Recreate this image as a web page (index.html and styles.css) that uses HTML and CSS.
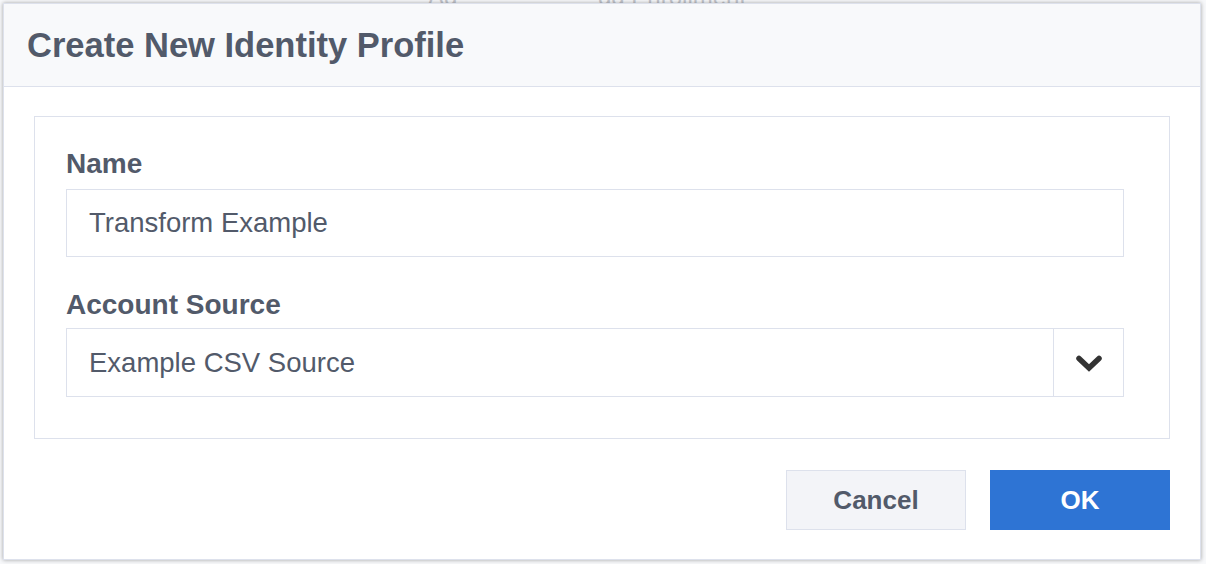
FILE: index.html
```html
<!DOCTYPE html>
<html lang="en">
<head>
<meta charset="utf-8">
<title>Create New Identity Profile</title>
<link rel="stylesheet" href="styles.css">
</head>
<body>
<div class="backdrop" aria-hidden="true">
  <span class="bd-a">Ag</span>
  <span class="bd-b">gg Enrollment</span>
</div>
<div class="modal">
  <div class="modal-header">
    <h1 class="modal-title">Create New Identity Profile</h1>
  </div>
  <div class="modal-body">
    <div class="form-box">
      <label class="field-label">Name</label>
      <div class="text-input">Transform Example</div>
      <label class="field-label second">Account Source</label>
      <div class="select">
        <div class="select-value">Example CSV Source</div>
        <div class="select-toggle">
          <svg width="28" height="18" viewBox="0 0 28 18"><path d="M4 4.5 L14 14 L24 4.5" fill="none" stroke="#333" stroke-width="5.5" stroke-linecap="round" stroke-linejoin="miter"/></svg>
        </div>
      </div>
    </div>
  </div>
  <div class="modal-footer">
    <button class="btn btn-cancel">Cancel</button>
    <button class="btn btn-ok">OK</button>
  </div>
</div>
</body>
</html>
```

FILE: styles.css
```css
* { box-sizing: border-box; }
html, body { margin: 0; padding: 0; }
body {
  background: #f7f8fa;
  font-family: "Liberation Sans", Arial, sans-serif;
  color: #525a6a;
  width: 1206px;
  height: 564px;
  overflow: hidden;
  position: relative;
}
.backdrop {
  position: absolute;
  top: -17px;
  left: 0;
  width: 100%;
  font-size: 24px;
  color: #c3c6cd;
}
.bd-a { position: absolute; left: 428px; }
.bd-b { position: absolute; left: 598px; }
.modal {
  position: relative;
  margin: 3px;
  width: 1198px;
  height: 557px;
  background: #fff;
  border: 1px solid #dde1ec;
  box-shadow: 0 0 4px rgba(0,0,0,0.35);
  display: flex;
  flex-direction: column;
}
.modal-header {
  height: 83px;
  background: #f8f9fb;
  border-bottom: 1px solid #dde1ec;
  display: flex;
  align-items: center;
  padding-left: 23px;
}
.modal-title {
  margin: 0;
  font-size: 34.5px;
  font-weight: bold;
  color: #525a6a;
  line-height: 40px;
}
.modal-body {
  padding: 29px 30px 0 30px;
}
.form-box {
  border: 1px solid #dde1ec;
  padding: 31px 45px 41px 31px;
  display: flex;
  flex-direction: column;
}
.field-label {
  display: block;
  font-size: 28px;
  font-weight: bold;
  line-height: 32px;
  margin-bottom: 9px;
  color: #525a6a;
}
.field-label.second {
  margin-top: 32px;
  margin-bottom: 7px;
}
.text-input {
  height: 68px;
  border: 1px solid #dde1ec;
  padding: 0 22px;
  font-size: 27.5px;
  line-height: 66px;
  color: #525a6a;
}
.select {
  height: 69px;
  border: 1px solid #dde1ec;
  display: flex;
}
.select-value {
  flex: 1;
  padding: 0 22px;
  font-size: 27.5px;
  line-height: 67px;
  color: #525a6a;
}
.select-toggle {
  width: 70px;
  border-left: 1px solid #dde1ec;
  display: flex;
  align-items: center;
  justify-content: center;
}
.modal-footer {
  margin-top: 31px;
  padding: 0 30px 29px 0;
  display: flex;
  justify-content: flex-end;
  gap: 24px;
}
.btn {
  width: 180px;
  height: 60px;
  font-family: "Liberation Sans", Arial, sans-serif;
  font-size: 26px;
  font-weight: bold;
  padding: 0;
  cursor: pointer;
}
.btn-cancel {
  background: #f3f4f8;
  border: 1px solid #dde1ec;
  color: #525a6a;
}
.btn-ok {
  background: #2e74d4;
  border: 1px solid #2e74d4;
  color: #fff;
}
```
